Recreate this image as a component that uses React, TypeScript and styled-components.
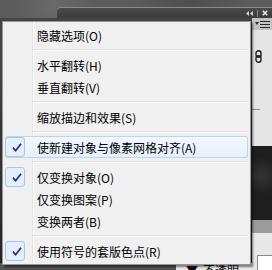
import styled, { createGlobalStyle } from "styled-components"

interface MenuEntry {
    label?: string,
    checked?: boolean,
    active?: boolean,
    separator?: boolean
}

const entries: MenuEntry[] = [
    { label: "隐藏选项(O)" },
    { separator: true },
    { label: "水平翻转(H)" },
    { label: "垂直翻转(V)" },
    { separator: true },
    { label: "缩放描边和效果(S)" },
    { separator: true },
    { label: "使新建对象与像素网格对齐(A)", checked: true, active: true },
    { separator: true },
    { label: "仅变换对象(O)", checked: true },
    { label: "仅变换图案(P)" },
    { label: "变换两者(B)" },
    { separator: true },
    { label: "使用符号的套版色点(R)", checked: true },
]

const GlobalStyle = createGlobalStyle`
    html, body {
        margin: 0;
        padding: 0;
        background: #2b2b2b;
    }
    body {
        font-family: "Noto Sans CJK SC", "Noto Sans", sans-serif;
    }
`

const Screen = styled.div`
    position: relative;
    width: 272px;
    height: 270px;
    overflow: hidden;
    display: flex;
    flex-direction: column;
    background: #2e2e2e;
`
const TopArea = styled.div`
    height: 18px;
    display: flex;
    background:
        radial-gradient(circle at 20% 30%, #6a6a6a 0, transparent 40px),
        radial-gradient(circle at 70% 10%, #4e4e4e 0, transparent 60px),
        #5c5c5c;
`
const HeaderBar = styled.div`
    flex: 1;
    margin: 7px 0 0 57px;
    height: 11px;
    box-sizing: border-box;
    border-top: 1px solid #8a8a8a;
    border-radius: 4px 0 0 0;
    background: linear-gradient(#4a4a4a, #3b3b3b);
    display: flex;
    align-items: center;
    justify-content: flex-end;
    gap: 4px;
    padding-right: 4px;
`
const ToolDivider = styled.div`
    width: 1px;
    height: 7px;
    background: #8a8a8a;
`
const Ruler = styled.div`
    height: 3px;
    background: #8e8e8e;
`
const Workspace = styled.div`
    flex: 1;
    display: flex;
`
const Canvas = styled.div`
    flex: 1;
    display: flex;
    flex-direction: column;
`
const Photo = styled.div`
    flex: 1;
    background:
        radial-gradient(circle at 10% 20%, #4a4a4a 0, transparent 60px),
        linear-gradient(#444, #262626);
`
const StatusRow = styled.div`
    height: 8px;
    display: flex;
    overflow: hidden;
`
const StatusDark = styled.div`
    width: 176px;
    background: #555;
`
const StatusLight = styled.div`
    flex: 1;
    background: #ececec;
    display: flex;
    align-items: flex-start;
    gap: 5px;
    padding-left: 10px;
    font-size: 12px;
    line-height: 12px;
    color: #111;
    span { margin-top: 1px; }
`
const Dock = styled.div`
    width: 20px;
    display: flex;
    flex-direction: column;
`
const DockBar = styled.div`
    height: 12px;
    background: #c3c3c3;
    display: flex;
    align-items: center;
    padding-left: 3px;
`
const DockPanel = styled.div`
    height: 116px;
    background: #e6e6e6;
    display: flex;
    flex-direction: column;
    padding-top: 20px;
    box-sizing: border-box;
    svg { margin-left: 3px; }
`
const DockRule = styled.div`
    width: 8px;
    height: 1px;
    margin-top: 46px;
    background: #8a8a8a;
`
const DockDark = styled.div`
    height: 74px;
    background:
        radial-gradient(circle at 50% 40%, #333 0, transparent 20px),
        #1e1e1e;
`
const DockBand = styled.div`
    height: 13px;
    background: #9c9c9c;
`
const DockLight = styled.div`
    flex: 1;
    background: #e8e8e8;
    padding: 22px 0 0 5px;
`
const InputBox = styled.div`
    height: 14px;
    background: #fff;
    border: 1px solid #8a8a8a;
    border-right: none;
`

const Menu = styled.div`
    position: absolute;
    left: 2px;
    top: 21px;
    width: 249px;
    box-sizing: border-box;
    padding: 2px;
    border: 1px solid #979797;
    background:
        linear-gradient(to right, transparent 29px, #e2e3e3 29px, #e2e3e3 30px, #fff 30px, #fff 31px, transparent 31px),
        #f0f0f0;
    box-shadow: 2px 2px 2px rgba(0, 0, 0, 0.5);
    font-size: 12px;
    color: #000;
`
const Item = styled.div<{ $active?: boolean }>`
    height: 22px;
    padding: 1px 0;
    box-sizing: border-box;
    display: flex;
    align-items: center;
    border-radius: 3px;
    background: ${p => p.$active ? "linear-gradient(#f4f8fe, #e6effb)" : "transparent"};
    box-shadow: ${p => p.$active ? "inset 0 0 0 1px #b9d4f5" : "none"};
`
const CheckSlot = styled.div<{ $checked?: boolean }>`
    width: 20px;
    height: 20px;
    box-sizing: border-box;
    display: flex;
    align-items: center;
    justify-content: center;
    padding: 1px 0 0 3px;
    border-radius: 3px;
    border: 1px solid ${p => p.$checked ? "#a9c6ec" : "transparent"};
    background: ${p => p.$checked ? "#e5eefa" : "transparent"};
`
const Label = styled.span`
    margin-left: 12px;
    white-space: nowrap;
`
const Separator = styled.div`
    height: 8px;
    display: flex;
    flex-direction: column;
    justify-content: center;
    padding-left: 28px;
    &::before {
        content: "";
        height: 1px;
        background: #e0e0e0;
    }
    &::after {
        content: "";
        height: 1px;
        background: #fff;
    }
`

function CheckMark() {
    return (
        <svg width="10" height="9" viewBox="0 0 10 9">
            <path d="M1 4.6 L3.6 7.8 L9 0.8" fill="none" stroke="#1d2e8c" strokeWidth="1.7" strokeLinejoin="round" />
        </svg>
    )
}

export default function App() {
    return (
        <>
            <GlobalStyle />
            <Screen>
                <TopArea>
                    <HeaderBar>
                        <svg width="7" height="5" viewBox="0 0 7 5">
                            <path d="M3 0 L0 2.5 L3 5 Z M7 0 L4 2.5 L7 5 Z" fill="#d4d4d4" />
                        </svg>
                        <ToolDivider />
                        <svg width="6" height="6" viewBox="0 0 6 6">
                            <path d="M0.8 0.8 L5.2 5.2 M5.2 0.8 L0.8 5.2" stroke="#f2f2f2" strokeWidth="1.5" />
                        </svg>
                    </HeaderBar>
                </TopArea>
                <Ruler />
                <Workspace>
                    <Canvas>
                        <Photo />
                        <StatusRow>
                            <StatusDark />
                            <StatusLight>
                                <span>▼</span>
                                <span>不透明度:</span>
                            </StatusLight>
                        </StatusRow>
                    </Canvas>
                    <Dock>
                        <DockBar>
                            <svg width="15" height="7" viewBox="0 0 15 7">
                                <path d="M0 1 L4 1 L2 4 Z" fill="#2a2a2a" />
                                <path d="M5 0.5 H15 M5 3.5 H15 M5 6.5 H15" stroke="#2a2a2a" strokeWidth="1" />
                            </svg>
                        </DockBar>
                        <DockPanel>
                            <svg width="7" height="13" viewBox="0 0 7 13">
                                <rect x="1" y="0.8" width="5" height="6.5" rx="2.5" fill="none" stroke="#1e1e1e" strokeWidth="1.4" />
                                <rect x="1" y="5.7" width="5" height="6.5" rx="2.5" fill="none" stroke="#1e1e1e" strokeWidth="1.4" />
                            </svg>
                            <DockRule />
                        </DockPanel>
                        <DockDark />
                        <DockBand />
                        <DockLight>
                            <InputBox />
                        </DockLight>
                    </Dock>
                </Workspace>
                <Menu>
                    {entries.map((e, i) => e.separator ? (
                        <Separator key={i} />
                    ) : (
                        <Item key={i} $active={e.active}>
                            <CheckSlot $checked={e.checked}>
                                {e.checked && <CheckMark />}
                            </CheckSlot>
                            <Label>{e.label}</Label>
                        </Item>
                    ))}
                </Menu>
            </Screen>
        </>
    )
}
